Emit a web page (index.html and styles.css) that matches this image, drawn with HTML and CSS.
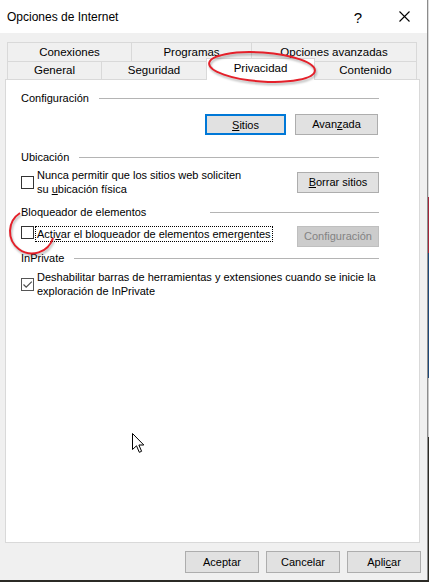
FILE: index.html
```html
<!DOCTYPE html>
<html lang="es">
<head>
    <meta charset="UTF-8">
    <meta name="viewport" content="width=device-width, initial-scale=1.0">
    <title>Opciones de Internet</title>
    <link rel="stylesheet" href="styles.css">
</head>
<body>

    <div class="window">
        <div class="titlebar">
            <span class="title">Opciones de Internet</span>
            <span class="ctl help">?</span>
            <span class="ctl close">
                <svg width="11" height="11" viewBox="0 0 11 11"><path d="M0.5 0.5 L10.5 10.5 M10.5 0.5 L0.5 10.5" stroke="#000" stroke-width="1.1" fill="none"/></svg>
            </span>
        </div>

        <div class="tabs">
            <div class="tab-row back">
                <div class="tab t-conexiones">Conexiones</div>
                <div class="tab t-programas">Programas</div>
                <div class="tab t-avanzadas">Opciones avanzadas</div>
            </div>
            <div class="tab-row front">
                <div class="tab t-general">General</div>
                <div class="tab t-seguridad">Seguridad</div>
                <div class="tab t-privacidad active">Privacidad</div>
                <div class="tab t-contenido">Contenido</div>
            </div>
        </div>

        <div class="panel">
            <div class="group-title"><span>Configuración</span></div>
            <div class="button-row">
                <button type="button" class="btn default"><u>S</u>itios</button>
                <button type="button" class="btn w-avanzada">Avan<u>z</u>ada</button>
            </div>

            <div class="group-title gt-ubicacion"><span>Ubicación</span></div>
            <div class="option-row centered">
                <label class="check">
                    <span class="box"></span>
                    <span class="text">Nunca permitir que los sitios web soliciten<br>su <u>u</u>bicación física</span>
                </label>
                <button type="button" class="btn side"><u>B</u>orrar sitios</button>
            </div>

            <div class="group-title gt-bloqueador"><span>Bloqueador de elementos</span></div>
            <div class="option-row top">
                <label class="check">
                    <span class="box"></span>
                    <span class="text focus">Acti<u>v</u>ar el bloqueador de elementos emergentes</span>
                </label>
                <button type="button" class="btn side disabled">Confi<u>g</u>uración</button>
            </div>

            <div class="group-title gt-inprivate"><span>InPrivate</span></div>
            <div class="option-row centered">
                <label class="check">
                    <span class="box checked">
                        <svg width="11" height="11" viewBox="0 0 11 11"><path d="M1.5 5.5 L4.2 8.2 L9.8 2.6" stroke="#4d4d4d" stroke-width="1.2" fill="none"/></svg>
                    </span>
                    <span class="text">Deshabilitar barras de herramientas y extensiones cuando se inicie la<br>exploración de InPrivate</span>
                </label>
            </div>
        </div>

        <div class="actions">
            <button type="button" class="btn">Aceptar</button>
            <button type="button" class="btn">Cancelar</button>
            <button type="button" class="btn">Apli<u>c</u>ar</button>
        </div>

        <!-- red marks drawn over the screenshot -->
        <svg class="mark mark-tab" width="130" height="50" viewBox="0 0 130 50">
            <ellipse cx="62" cy="22" rx="53" ry="14.5" transform="rotate(4 62 22)" fill="none" stroke="#e4202a" stroke-width="2"/>
        </svg>
        <svg class="mark mark-check" width="80" height="70" viewBox="0 0 80 70">
            <path d="M20 13 A22 22 0 1 0 53 38" fill="none" stroke="#e4202a" stroke-width="2"/>
        </svg>

        <svg class="cursor" width="14" height="21" viewBox="0 0 14 21">
            <path d="M0.5 0.5 L0.5 16.5 L4.5 12.8 L7.3 19.3 L9.6 18.3 L6.9 12 L11.8 12 Z" fill="#fff" stroke="#000" stroke-width="1"/>
        </svg>
    </div>

</body>
</html>
```

FILE: styles.css
```css
* {
    box-sizing: border-box;
}

html {
    height: 100%;
    background: linear-gradient(to bottom,
        #dcdcdc 0, #dcdcdc 197px,
        #a3253a 197px, #a3253a 253px,
        #1d4777 253px, #1d4777 378px,
        #c8c8c8 378px, #c8c8c8 437px,
        #2b2a25 437px);
}

body {
    margin: 0;
    font-family: "Liberation Sans", Arial, sans-serif;
    font-size: 11px;
    color: #000;
}

.window {
    position: relative;
    width: 428px;
    height: 580px;
    background: #f0f0f0;
    border-right: 1px solid #8c8c8c;
}

/* title bar */

.titlebar {
    height: 33px;
    background: #fff;
    display: flex;
    align-items: center;
    padding-left: 7px;
}

.title {
    flex: 1;
    font-size: 12px;
}

.ctl {
    width: 46px;
    height: 33px;
    display: flex;
    align-items: center;
    justify-content: center;
}

.help {
    font-size: 15px;
    padding-top: 1px;
}

/* tabs */

.tabs {
    margin: 9px 0 0 7px;
}

.tab-row {
    display: flex;
    align-items: flex-start;
}

.tab-row.back {
    height: 19px;
}

.tab-row.front {
    height: 18px;
}

.tab {
    border: 1px solid #d9d9d9;
    border-bottom: none;
    background: #f0f0f0;
    text-align: center;
    line-height: 16px;
    font-size: 11.5px;
}

.tab + .tab {
    margin-left: -1px;
}

.back .tab {
    height: 19px;
    padding-top: 1px;
}

.front .tab {
    height: 18px;
}

.tab.active {
    position: relative;
    background: #fff;
    margin-top: -3px;
    height: 22px;
    padding-top: 1px;
}

.t-conexiones { width: 125px; }
.t-programas { width: 121px; }
.t-avanzadas { width: 166px; }
.t-general { width: 95px; }
.t-seguridad { width: 106px; }
.t-privacidad { width: 109px; }
.t-contenido { width: 103px; }

/* tab page */

.panel {
    margin-left: 5px;
    width: 415px;
    height: 464px;
    background: #fff;
    border: 1px solid #d9d9d9;
    padding: 10px 40px 0 15px;
}

.group-title {
    display: flex;
    align-items: center;
    height: 16px;
    line-height: 16px;
    white-space: nowrap;
}

.group-title::after {
    content: "";
    flex: 1;
    height: 1px;
    background: #b4b4b4;
    margin-left: 10px;
}

.gt-ubicacion { margin-top: 14px; }
.gt-bloqueador { margin-top: 8px; }
.gt-inprivate { margin-top: 3px; }

.gt-bloqueador span {
    width: 179px;
}

.button-row {
    display: flex;
    justify-content: flex-end;
    gap: 9px;
    margin-top: 8px;
    padding-right: 1px;
}

.option-row {
    display: flex;
    justify-content: space-between;
}

.option-row.centered {
    align-items: center;
    height: 28px;
}

.gt-ubicacion + .option-row { margin-top: 3px; }
.gt-bloqueador + .option-row { margin-top: 6px; }
.gt-inprivate + .option-row { margin-top: 4px; }

.check {
    display: flex;
    align-items: center;
    line-height: 14px;
}

.top .check {
    align-items: flex-start;
}

.box {
    width: 13px;
    height: 13px;
    flex: none;
    border: 1px solid #333;
    background: #fff;
    margin-right: 3px;
}

.box.checked {
    border-color: #555;
}

.box svg {
    display: block;
}

.text.focus {
    border: 1px dotted #000;
    padding: 0 1px;
    margin-left: -2px;
}

/* buttons */

.btn {
    font: inherit;
    color: #000;
    height: 21px;
    width: 74px;
    padding: 0;
    border: 1px solid #adadad;
    background: #e1e1e1;
    line-height: 19px;
    text-align: center;
}

.btn.default {
    width: 81px;
    border: 2px solid #0078d7;
}

.btn.w-avanzada {
    width: 83px;
}

.btn.side {
    width: 82px;
}

.btn.disabled {
    background: #cccccc;
    border-color: #bfbfbf;
    color: #838383;
}

.actions {
    display: flex;
    justify-content: flex-end;
    gap: 7px;
    padding-right: 6px;
    margin-top: 8px;
}

.actions .btn {
    height: 22px;
}

/* overlays */

.mark {
    position: absolute;
    filter: drop-shadow(1px 2px 1px rgba(0, 0, 0, 0.3));
}

.mark-tab {
    left: 200px;
    top: 45px;
}

.mark-check {
    left: 0;
    top: 200px;
}

.cursor {
    position: absolute;
    left: 132px;
    top: 433px;
}
```
